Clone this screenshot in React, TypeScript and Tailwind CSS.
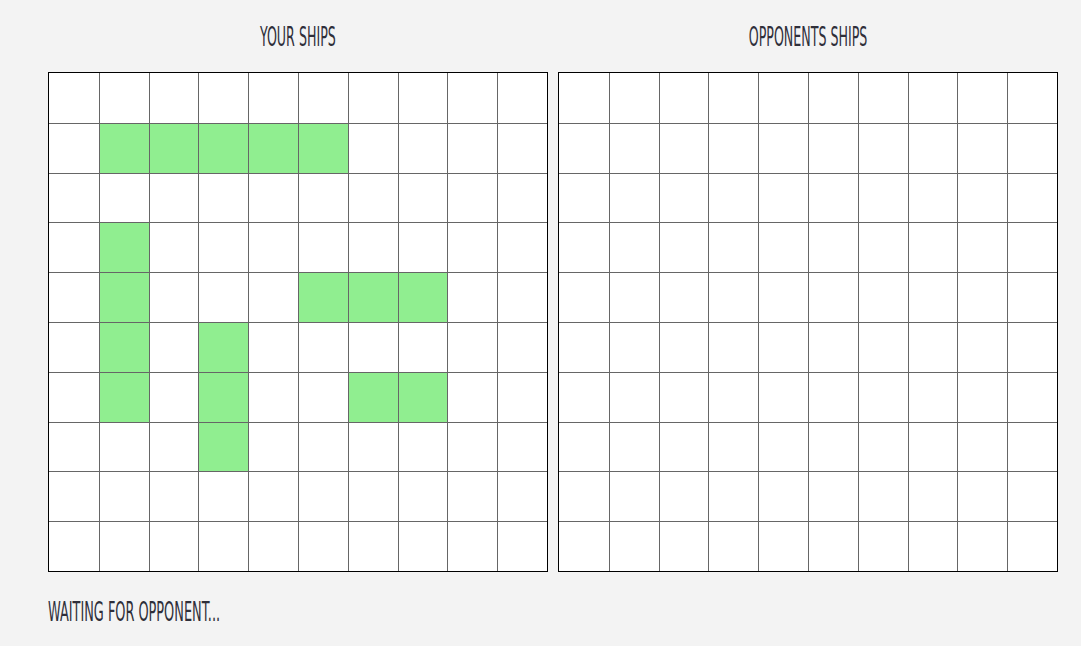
import React from 'react';

const SHIP_CELLS = new Set([
  '1-1', '1-2', '1-3', '1-4', '1-5',
  '3-1', '4-1', '5-1', '6-1',
  '4-5', '4-6', '4-7',
  '5-3', '6-3', '7-3',
  '6-6', '6-7',
]);

const Title: React.FC<{ text: string }> = ({ text }) => (
  <div className="h-[72px] flex items-center justify-center">
    <span className="inline-block text-[27px] leading-none text-[#2f2f3a] font-['DejaVu_Sans_Condensed','DejaVu_Sans',sans-serif] font-extralight scale-x-[0.52] whitespace-nowrap">
      {text}
    </span>
  </div>
);

const Board: React.FC<{ ships?: boolean }> = ({ ships }) => (
  <div className="w-[500px] h-[500px] border border-black bg-white grid grid-cols-10 grid-rows-10 box-border">
    {Array.from({ length: 100 }).map((_, i) => {
      const r = Math.floor(i / 10);
      const c = i % 10;
      const filled = ships && SHIP_CELLS.has(`${r}-${c}`);
      return (
        <div
          key={i}
          className={`border-[#666666] ${c > 0 ? 'border-l' : ''} ${r > 0 ? 'border-t' : ''} ${
            filled ? 'bg-[#90ee90]' : 'bg-white'
          }`}
        />
      );
    })}
  </div>
);

export default function App() {
  return (
    <div className="min-h-screen w-full bg-[#f3f3f3] px-[48px]">
      <div className="flex gap-[10px]">
        <div className="w-[500px]">
          <Title text="YOUR SHIPS" />
          <Board ships />
        </div>
        <div className="w-[500px]">
          <Title text="OPPONENTS SHIPS" />
          <Board />
        </div>
      </div>
      <div className="h-[78px] flex items-center">
        <span className="inline-block origin-left text-[27px] leading-none text-[#2f2f3a] font-['DejaVu_Sans_Condensed','DejaVu_Sans',sans-serif] font-extralight scale-x-[0.53] whitespace-nowrap">
          WAITING FOR OPPONENT...
        </span>
      </div>
    </div>
  );
}
